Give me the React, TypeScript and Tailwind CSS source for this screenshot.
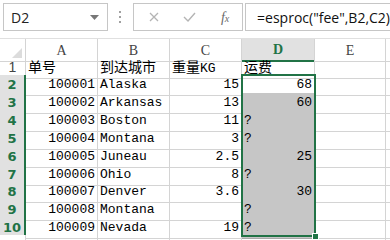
import React from "react";

type Row = { n: number; a: string; b: string; c: string; d: string; dNum: boolean };

const data: Row[] = [
  { n: 2, a: "100001", b: "Alaska", c: "15", d: "68", dNum: true },
  { n: 3, a: "100002", b: "Arkansas", c: "13", d: "60", dNum: true },
  { n: 4, a: "100003", b: "Boston", c: "11", d: "?", dNum: false },
  { n: 5, a: "100004", b: "Montana", c: "3", d: "?", dNum: false },
  { n: 6, a: "100005", b: "Juneau", c: "2.5", d: "25", dNum: true },
  { n: 7, a: "100006", b: "Ohio", c: "8", d: "?", dNum: false },
  { n: 8, a: "100007", b: "Denver", c: "3.6", d: "30", dNum: true },
  { n: 9, a: "100008", b: "Montana", c: "", d: "?", dNum: false },
  { n: 10, a: "100009", b: "Nevada", c: "19", d: "?", dNum: false },
];

const heights = [18, 18, 18, 18, 18, 17, 18, 18, 17];

const mono = "font-['Liberation_Mono','Noto_Sans_CJK_SC',monospace]";
const cjk = "font-['Noto_Sans_CJK_SC',sans-serif] text-[14px]";

function Cell({ children, right, className = "" }: { children?: React.ReactNode; right?: boolean; className?: string }) {
  return (
    <div
      className={`flex items-center overflow-hidden whitespace-nowrap border-r border-b border-[#d4d4d4] px-[2px] text-[13px] text-black ${mono} ${right ? "justify-end" : "justify-start"} ${className}`}
    >
      <span>{children}</span>
    </div>
  );
}

export default function App() {
  return (
    <div className="w-[390px] h-[240px] overflow-hidden bg-white relative">
      {/* toolbar */}
      <div className="flex h-[38px] items-start pt-[3px] pl-[3px]">
        <div className="flex h-[28px] w-[106px] items-center justify-between border border-[#c6c6c6] pl-[7px] pr-[8px]">
          <span className="font-['Open_Sans',sans-serif] text-[14px] text-[#222]">D2</span>
          <svg width="9" height="5" viewBox="0 0 9 5"><path d="M0 0 L9 0 L4.5 5 Z" fill="#777" /></svg>
        </div>
        <div className="flex w-[26px] h-[28px] flex-col items-center justify-center gap-[3px]">
          <div className="h-[2px] w-[2px] bg-[#a0a0a0]" />
          <div className="h-[2px] w-[2px] bg-[#a0a0a0]" />
          <div className="h-[2px] w-[2px] bg-[#a0a0a0]" />
        </div>
        <div className="flex h-[28px] w-[111px] items-center border border-[#c6c6c6]">
          <div className="flex w-[36px] justify-center pl-[4px]">
            <svg width="10" height="10" viewBox="0 0 10 10"><path d="M1 1 L9 9 M9 1 L1 9" stroke="#b4b4b4" strokeWidth="1.3" /></svg>
          </div>
          <div className="flex w-[38px] justify-center">
            <svg width="13" height="10" viewBox="0 0 13 10"><path d="M1 5 L5 9 L12 1" stroke="#b4b4b4" strokeWidth="1.4" fill="none" /></svg>
          </div>
          <div className="flex w-[34px] justify-center">
            <span className="font-['Liberation_Serif',serif] italic text-[14px] text-[#6a6a6a]">f<span className="text-[10px]">x</span></span>
          </div>
        </div>
        <div className="ml-[2px] flex h-[28px] flex-1 items-center border border-[#c6c6c6] border-r-0 pl-[11px]">
          <span className="font-['Open_Sans',sans-serif] text-[14px] text-[#111] whitespace-nowrap">=esproc("fee",B2,C2)</span>
        </div>
      </div>

      {/* grid */}
      <div className="relative">
        {/* header row */}
        <div className="grid h-[19px] grid-cols-[26px_72px_72px_72px_73px_71px_1fr] border-t border-[#e0e0e0]">
          <div className="relative border-r border-b border-[#d4d4d4]">
            <svg className="absolute right-[3px] bottom-[3px]" width="10" height="10" viewBox="0 0 10 10"><path d="M10 0 L10 10 L0 10 Z" fill="#dcdcdc" /></svg>
          </div>
          {["A", "B", "C"].map((l) => (
            <div key={l} className="flex items-center justify-center border-r border-b border-[#d4d4d4] font-['Liberation_Serif',serif] text-[14px] text-[#444]">{l}</div>
          ))}
          <div className="flex items-center justify-center border-r border-[#d4d4d4] border-b-2 border-b-[#217346] bg-[#e1e1e1] font-['Liberation_Serif',serif] text-[14px] font-bold text-[#217346]">D</div>
          <div className="flex items-center justify-center border-r border-b border-[#d4d4d4] font-['Liberation_Serif',serif] text-[14px] text-[#444]">E</div>
          <div className="border-b border-[#d4d4d4]" />
        </div>
        {/* row 1 */}
        <div className="grid h-[18px] grid-cols-[26px_72px_72px_72px_73px_71px_1fr]">
          <div className="flex items-center justify-center border-r border-b border-[#d4d4d4] font-['Liberation_Sans',sans-serif] text-[14px] text-[#444]">1</div>
          <Cell><span className={cjk}>单号</span></Cell>
          <Cell><span className={cjk}>到达城市</span></Cell>
          <Cell><span className={cjk}>重量</span>KG</Cell>
          <Cell><span className={cjk}>运费</span></Cell>
          <Cell />
          <div className="border-b border-[#d4d4d4]" />
        </div>
        {data.map((r, i) => (
          <div key={r.n} className="grid grid-cols-[26px_72px_72px_72px_73px_71px_1fr]" style={{ height: heights[i] }}>
            <div className="flex items-center justify-center border-r-2 border-r-[#217346] border-b border-[#c0c0c0] bg-[#e1e1e1] font-['DejaVu_Sans',sans-serif] text-[13px] font-bold text-[#217346]">{r.n}</div>
            <Cell right>{r.a}</Cell>
            <Cell>{r.b}</Cell>
            <Cell right>{r.c}</Cell>
            <Cell right={r.dNum} className={i === 0 ? "" : "bg-[#c6c6c6] border-b-[#a8a8a8]"}>{r.d}</Cell>
            <Cell />
            <div className="border-b border-[#d4d4d4]" />
          </div>
        ))}
        <div className="grid h-[10px] grid-cols-[26px_72px_72px_72px_73px_71px_1fr]">
          <div className="border-r border-[#d4d4d4] bg-white" />
          <div className="border-r border-[#d4d4d4]" />
          <div className="border-r border-[#d4d4d4]" />
          <div className="border-r border-[#d4d4d4]" />
          <div className="border-r border-[#d4d4d4]" />
          <div className="border-r border-[#d4d4d4]" />
          <div />
        </div>

        {/* selection border */}
        <div className="pointer-events-none absolute left-[241px] top-[36px] h-[163px] w-[75px] border-2 border-[#217346]" />
        <div className="pointer-events-none absolute left-[312px] top-[195px] h-[7px] w-[7px] border border-white bg-[#217346]" />
      </div>
    </div>
  );
}
